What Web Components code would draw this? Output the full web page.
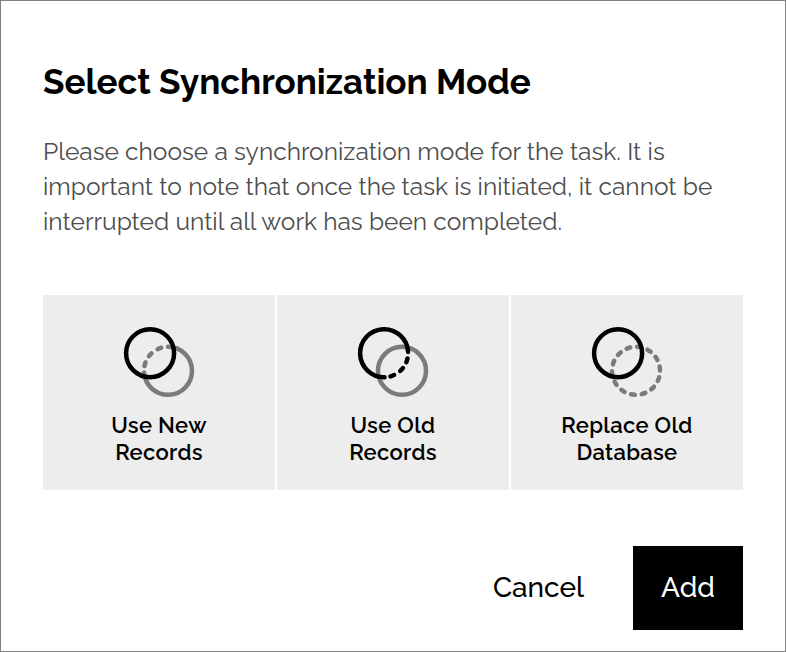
<!DOCTYPE html>
<html lang="en">
<head>
<meta charset="utf-8">
<title>Select Synchronization Mode</title>
<style>
html, body { margin: 0; height: 100%; background: #fff; overflow: hidden; }
body { font-family: Raleway, Lato, "Open Sans", sans-serif; color: #000; }
</style>
</head>
<body>
<sync-dialog></sync-dialog>
<script>
// One unbroken line of text.
class TextLine extends HTMLElement {
  connectedCallback() {
    this.attachShadow({ mode: "open" }).innerHTML = `<style>
      :host { display: block; white-space: nowrap; }
    </style><slot></slot>`;
  }
}
customElements.define("text-line", TextLine);

const point = (cx, cy, deg) => {
  const a = deg * Math.PI / 180;
  return (cx + 24 * Math.cos(a)).toFixed(2) + " " + (cy + 24 * Math.sin(a)).toFixed(2);
};
const arc = (cx, cy, from, to) =>
  `M${point(cx, cy, from)}A24 24 0 ${to - from > 180 ? 1 : 0} 1 ${point(cx, cy, to)}`;
const dashes = (cx, cy, centers) => centers.map(c => arc(cx, cy, c - 4.6, c + 4.6)).join("");
const ring = (cx, cy) => arc(cx, cy, 0, 180) + arc(cx, cy, 180, 360);

class SyncIcon extends HTMLElement {
  connectedCallback() {
    const kind = this.getAttribute("kind");
    let front = ring(26.1, 26.2), back = ring(44, 43.8);
    if (kind === "new") back = arc(44, 43.8, -90, 176) + dashes(44, 43.8, [-111, -138, -164]);
    if (kind === "old") front = arc(26.1, 26.2, 89, 357) + dashes(26.1, 26.2, [17.5, 43, 70]);
    if (kind === "replace") back = dashes(44, 43.8, Array.from({ length: 14 }, (_, i) => -5.5 + i * 360 / 14));
    this.attachShadow({ mode: "open" }).innerHTML = `<style>
      :host { display: block; width: 70px; height: 70px; }
      svg { display: block; overflow: visible; fill: none; stroke-width: 4.5; stroke-linecap: round; }
    </style><svg width="70" height="70" viewBox="0 0 70 70">
      <path d="${back}" stroke="#7b7b7b"/><path d="${front}" stroke="#000"/></svg>`;
  }
}
customElements.define("sync-icon", SyncIcon);

class ModeCard extends HTMLElement {
  connectedCallback() {
    this.attachShadow({ mode: "open" }).innerHTML = `<style>
      :host { display: flex; flex-direction: column; align-items: center; box-sizing: border-box;
        height: 195px; padding-top: 32px; background: #ededed; cursor: pointer; }
      .label { margin-top: 15px; display: flex; flex-direction: column; align-items: center;
        font-size: 22px; line-height: 27px; font-weight: 640; letter-spacing: 0.3px; }
    </style><sync-icon kind="${this.getAttribute("kind")}"></sync-icon>
    <div class="label"><slot></slot></div>`;
  }
}
customElements.define("mode-card", ModeCard);

class DialogButton extends HTMLElement {
  connectedCallback() {
    this.attachShadow({ mode: "open" }).innerHTML = `<style>
      :host { display: flex; align-items: center; justify-content: center; box-sizing: border-box;
        height: 84px; padding: 0 28px 1px; font-size: 28px; line-height: 34px; font-weight: 500; cursor: pointer; }
      :host([primary]) { background: #000; color: #fff; width: 110px; }
    </style><slot></slot>`;
  }
}
customElements.define("dialog-button", DialogButton);

class SyncDialog extends HTMLElement {
  connectedCallback() {
    this.attachShadow({ mode: "open" }).innerHTML = `<style>
      :host { display: block; box-sizing: border-box; width: 786px; height: 652px;
        border: 1px solid #808080; padding: 60px 42px 0; background: #fff; }
      h1 { margin: 0; font-size: 35px; line-height: 42px; font-weight: 700; }
      .copy { margin-top: 31px; font-size: 24.5px; line-height: 35px; color: #4d4d4d; font-weight: 400; }
      .modes { margin-top: 56px; display: grid; grid-template-columns: repeat(3, 232px); gap: 2px; }
      .actions { margin-top: 56px; display: flex; justify-content: flex-end; gap: 21px; }
    </style>
    <h1><text-line>Select Synchronization Mode</text-line></h1>
    <div class="copy">
      <text-line>Please choose a synchronization mode for the task. It is</text-line>
      <text-line>important to note that once the task is initiated, it cannot be</text-line>
      <text-line>interrupted until all work has been completed.</text-line>
    </div>
    <div class="modes">
      <mode-card kind="new"><text-line>Use New</text-line><text-line>Records</text-line></mode-card>
      <mode-card kind="old"><text-line>Use Old</text-line><text-line>Records</text-line></mode-card>
      <mode-card kind="replace"><text-line>Replace Old</text-line><text-line>Database</text-line></mode-card>
    </div>
    <div class="actions">
      <dialog-button><text-line>Cancel</text-line></dialog-button>
      <dialog-button primary><text-line>Add</text-line></dialog-button>
    </div>`;
  }
}
customElements.define("sync-dialog", SyncDialog);
</script>
</body>
</html>
